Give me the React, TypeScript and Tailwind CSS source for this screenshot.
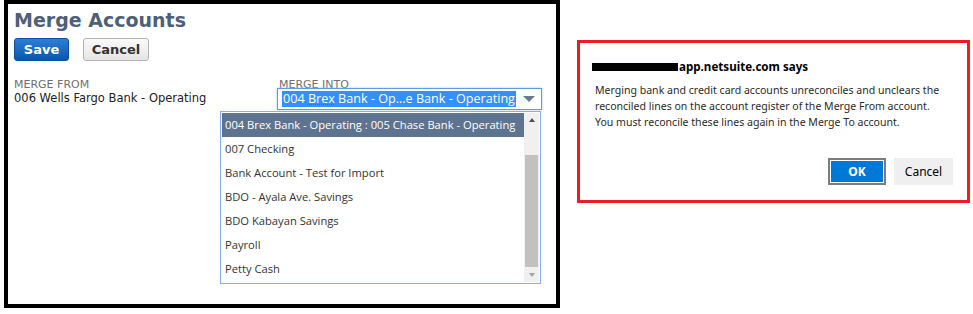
import { useState } from 'react'

const accounts = [
  '004 Brex Bank - Operating : 005 Chase Bank - Operating',
  '007 Checking',
  'Bank Account - Test for Import',
  'BDO - Ayala Ave. Savings',
  'BDO Kabayan Savings',
  'Payroll',
  'Petty Cash',
]

function AccountSelect() {
  const [active] = useState(0)

  return (
    <div className="relative">
      <div className="flex h-[22px] w-[265px] items-center border border-[#5c9ce0] bg-white pl-[4px] pr-[6px] shadow-[0_0_2px_#9cc4ef]">
        <span className="whitespace-nowrap bg-[#3390ff] px-[1px] text-[12.6px] leading-[16px] text-white [font-family:'Open_Sans',sans-serif]">
          004 <span className="underline decoration-dotted decoration-[#e03030] decoration-1 underline-offset-[1px]">Brex</span> Bank - Op...e Bank - Operating
        </span>
        <span className="ml-auto h-0 w-0 border-x-[6px] border-t-[6px] border-x-transparent border-t-[#6b7a8f]" />
      </div>
      <div className="absolute left-[-57px] top-[23px] flex h-[173px] w-[321px] border border-[#7db2ea] bg-white p-[1px] [font-family:'Open_Sans',sans-serif]">
        <ul className="flex-1">
          {accounts.map((name, i) => (
            <li
              key={name}
              className={
                i === active
                  ? 'h-[24px] whitespace-nowrap bg-[#5e7390] pl-[3px] text-[11.2px] leading-[24px] text-white'
                  : 'h-[24px] whitespace-nowrap pl-[3px] text-[11.2px] leading-[24px] text-[#333]'
              }
            >
              {name}
            </li>
          ))}
        </ul>
        <div className="flex w-[15px] flex-col bg-[#f0f0f0]">
          <div className="flex h-[14px] items-center justify-center">
            <span className="h-0 w-0 border-x-[3px] border-b-[4px] border-x-transparent border-b-[#505050]" />
          </div>
          <div className="mx-[1px] mt-[28px] h-[112px] bg-[#c1c1c1]" />
          <div className="mt-auto flex h-[14px] items-center justify-center">
            <span className="h-0 w-0 border-x-[3px] border-t-[4px] border-x-transparent border-t-[#a3a3a3]" />
          </div>
        </div>
      </div>
    </div>
  )
}

function MergePanel() {
  return (
    <div className="ml-[4px] h-[308px] w-[556px] border-[4px] border-black bg-white pl-[6px] pt-[3px] [font-family:'DejaVu_Sans',sans-serif]">
      <h1 className="text-[19px] font-bold leading-[26px] text-[#4d5f79]">Merge Accounts</h1>
      <div className="mt-[5px] flex gap-[14px]">
        <button className="h-[23px] w-[55px] rounded-[3px] border border-[#0d4f9c] bg-gradient-to-b from-[#2a7fd6] to-[#0a57ad] text-[13px] font-bold text-white">
          Save
        </button>
        <button className="h-[23px] w-[66px] rounded-[3px] border border-[#b4b4b4] bg-gradient-to-b from-[#fafafa] to-[#e5e5e5] text-[13px] font-bold text-[#333]">
          Cancel
        </button>
      </div>
      <div className="mt-[17px] flex">
        <div className="w-[263px]">
          <div className="text-[11px] leading-[13px] text-[#6f6f6f]">MERGE FROM</div>
          <div className="text-[11.5px] leading-[14px] text-[#222]">006 Wells Fargo Bank - Operating</div>
        </div>
        <div>
          <div className="h-[10px] pl-[2px] text-[11px] leading-[13px] text-[#6f6f6f]">MERGE INTO</div>
          <AccountSelect />
        </div>
      </div>
    </div>
  )
}

function ConfirmDialog() {
  return (
    <div className="ml-[17px] mt-[40px] flex h-[163px] w-[393px] flex-col border-[3px] border-[#ec1c24] bg-white px-[12px] pt-[16px] [font-family:'Noto_Sans',sans-serif]">
      <div className="flex items-center whitespace-nowrap text-[11.6px] font-bold leading-[16px] text-black">
        <span className="mr-[1px] inline-block h-[8px] w-[86px] bg-black" />
        app.netsuite.com says
      </div>
      <p className="mt-[7px] whitespace-nowrap pl-[3px] text-[10.55px] leading-[16px] text-[#2b2b2b]">
        Merging bank and credit card accounts unreconciles and unclears the
        <br />
        reconciled lines on the account register of the Merge From account.
        <br />
        You must reconcile these lines again in the Merge To account.
      </p>
      <div className="mt-[28px] flex justify-end gap-[8px] pr-[2px]">
        <button className="h-[27px] w-[58px] border-[2px] border-[#7d7d7d] bg-[#0078d7] text-[12px] font-bold text-white outline outline-1 outline-white -outline-offset-[3px]">
          OK
        </button>
        <button className="h-[27px] w-[59px] bg-[#efefef] text-[12px] text-black">Cancel</button>
      </div>
    </div>
  )
}

export default function App() {
  return (
    <div className="flex h-[314px] w-[973px] items-start bg-white">
      <MergePanel />
      <ConfirmDialog />
    </div>
  )
}
